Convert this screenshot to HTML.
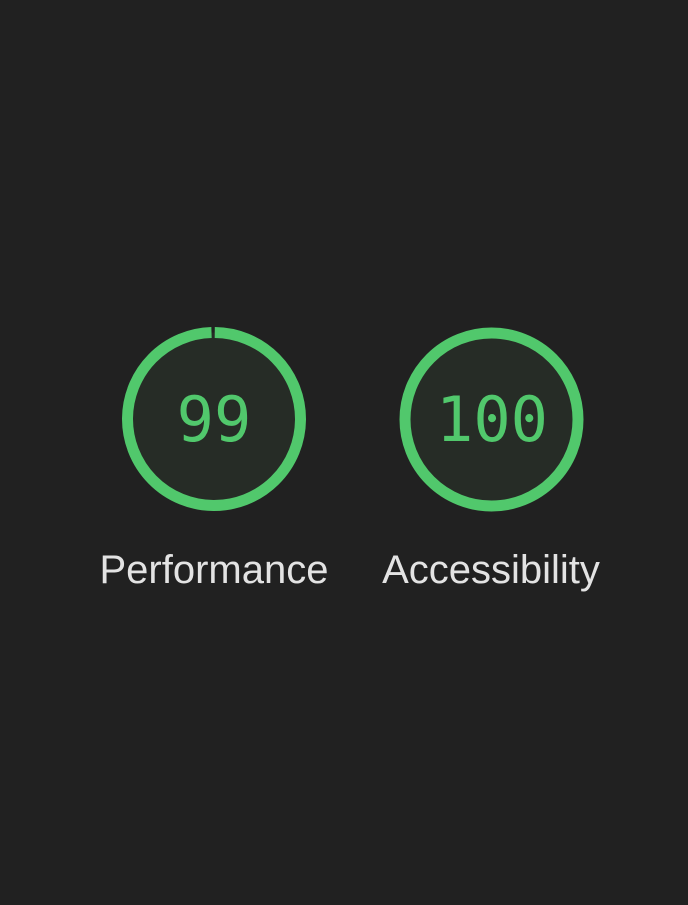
<!DOCTYPE html>
<html><head><style>
html,body{margin:0;padding:0;background:#212121;width:688px;height:905px;overflow:hidden}
.lbl{position:absolute;top:544px;font-family:"Liberation Sans",sans-serif;font-size:40px;color:#e3e3e3;width:320px;text-align:center;line-height:52px}
</style></head><body>
<svg width="688" height="905" style="position:absolute;left:0;top:0">
<circle cx="214" cy="419" r="86.5" fill="#262c26"/>
<circle cx="214" cy="419" r="86.5" fill="none" stroke="#51c86c" stroke-width="11" stroke-dasharray="540 3.5" transform="rotate(-89.5 214 419)"/>
<circle cx="491.5" cy="419.5" r="86.5" fill="#262c26" stroke="#51c86c" stroke-width="11"/>
<text x="214" y="441" text-anchor="middle" font-family="'DejaVu Sans Mono','Liberation Mono',monospace" font-size="62" fill="#51c86c">99</text>
<text x="492" y="441" text-anchor="middle" font-family="'DejaVu Sans Mono','Liberation Mono',monospace" font-size="62" fill="#51c86c">100</text>
</svg>
<div class="lbl" style="left:54px">Performance</div>
<div class="lbl" style="left:331px">Accessibility</div>
</body></html>
